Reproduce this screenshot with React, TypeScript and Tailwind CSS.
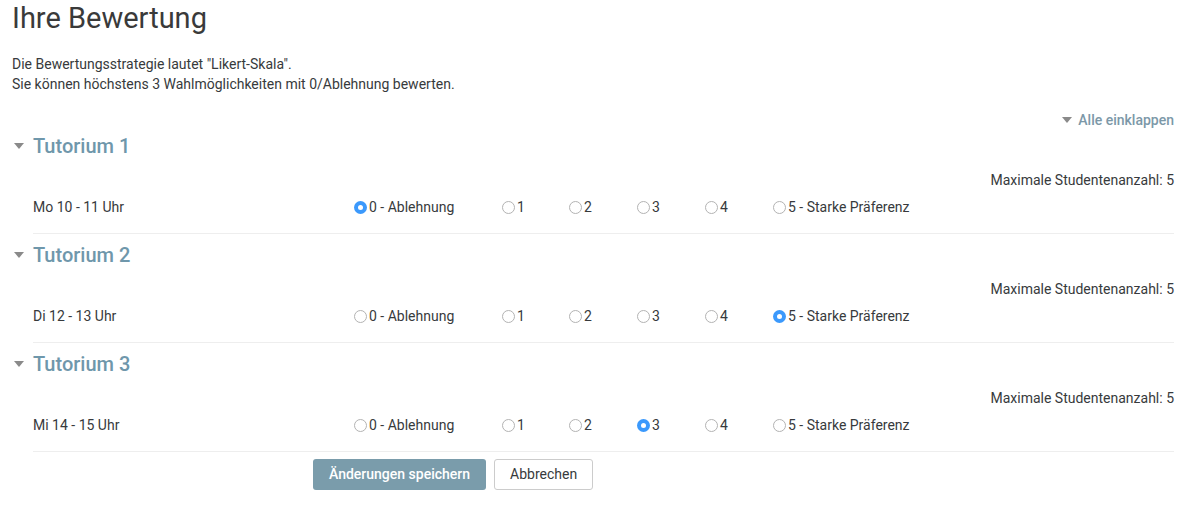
type Slot = { title: string; time: string; selected: number };

const slots: Slot[] = [
  { title: 'Tutorium 1', time: 'Mo 10 - 11 Uhr', selected: 0 },
  { title: 'Tutorium 2', time: 'Di 12 - 13 Uhr', selected: 5 },
  { title: 'Tutorium 3', time: 'Mi 14 - 15 Uhr', selected: 3 },
];

const options = [
  { label: '0 - Ablehnung', w: 'w-[148px]' },
  { label: '1', w: 'w-[67px]' },
  { label: '2', w: 'w-[68px]' },
  { label: '3', w: 'w-[68px]' },
  { label: '4', w: 'w-[68px]' },
  { label: '5 - Starke Präferenz', w: 'w-auto' },
];

function Caret() {
  return (
    <svg width="10" height="6" viewBox="0 0 10 6" className="shrink-0">
      <path d="M0 0 L10 0 L5 6 Z" fill="#8a8a8a" />
    </svg>
  );
}

function Radio({ checked }: { checked: boolean }) {
  if (checked) {
    return (
      <span className="w-[13px] h-[13px] rounded-full bg-[#3b99fc] flex items-center justify-center shrink-0">
        <span className="w-[5px] h-[5px] rounded-full bg-white" />
      </span>
    );
  }
  return <span className="w-[13px] h-[13px] rounded-full border border-[#b3b3b3] bg-white shrink-0" />;
}

export default function App() {
  return (
    <div className="w-[1200px] h-[520px] bg-white px-3 text-[#373a3c] font-['Roboto',sans-serif] overflow-hidden">
      <h2 className="text-[29px] leading-[36px] text-[#3a3a3a]">Ihre Bewertung</h2>

      <div className="mt-[18px] text-[14px] leading-[20px]">
        <p>Die Bewertungsstrategie lautet "Likert-Skala".</p>
        <p>Sie können höchstens 3 Wahlmöglichkeiten mit 0/Ablehnung bewerten.</p>
      </div>

      <div className="mt-4 flex justify-end pr-[14px]">
        <a className="flex items-center gap-[6px] text-[14px] leading-[20px] text-[#7c98a8] font-medium">
          <Caret />
          Alle einklappen
        </a>
      </div>

      <div className="pr-[14px]">
        {slots.map((s, i) => (
          <section key={s.title} className={i === 0 ? 'mt-1' : 'mt-[9px]'}>
            <div className="flex items-center gap-[9px] pl-[2px]">
              <Caret />
              <h3 className="text-[20px] leading-[24px] text-[#6f97ab] font-medium">{s.title}</h3>
            </div>
            <div className="mt-3 text-right text-[14px] leading-[20px]">
              Maximale Studentenanzahl: 5
            </div>
            <div className="ml-[21px] flex items-center pt-[7px] pb-4 border-b border-[#eeeeee] text-[14px] leading-[20px]">
              <div className="w-[321px]">{s.time}</div>
              {options.map((o, j) => (
                <label key={o.label} className={`${o.w} flex items-center gap-[2px]`}>
                  <Radio checked={s.selected === j} />
                  <span>{o.label}</span>
                </label>
              ))}
            </div>
          </section>
        ))}
      </div>

      <div className="mt-[7px] ml-[301px] flex gap-2">
        <button className="h-[31px] px-[16px] rounded-[3px] bg-[#7a9cab] text-white text-[14px] font-medium">
          Änderungen speichern
        </button>
        <button className="h-[31px] px-[15px] rounded-[3px] border border-[#cccccc] bg-white text-[14px] text-[#373a3c]">
          Abbrechen
        </button>
      </div>
    </div>
  );
}
